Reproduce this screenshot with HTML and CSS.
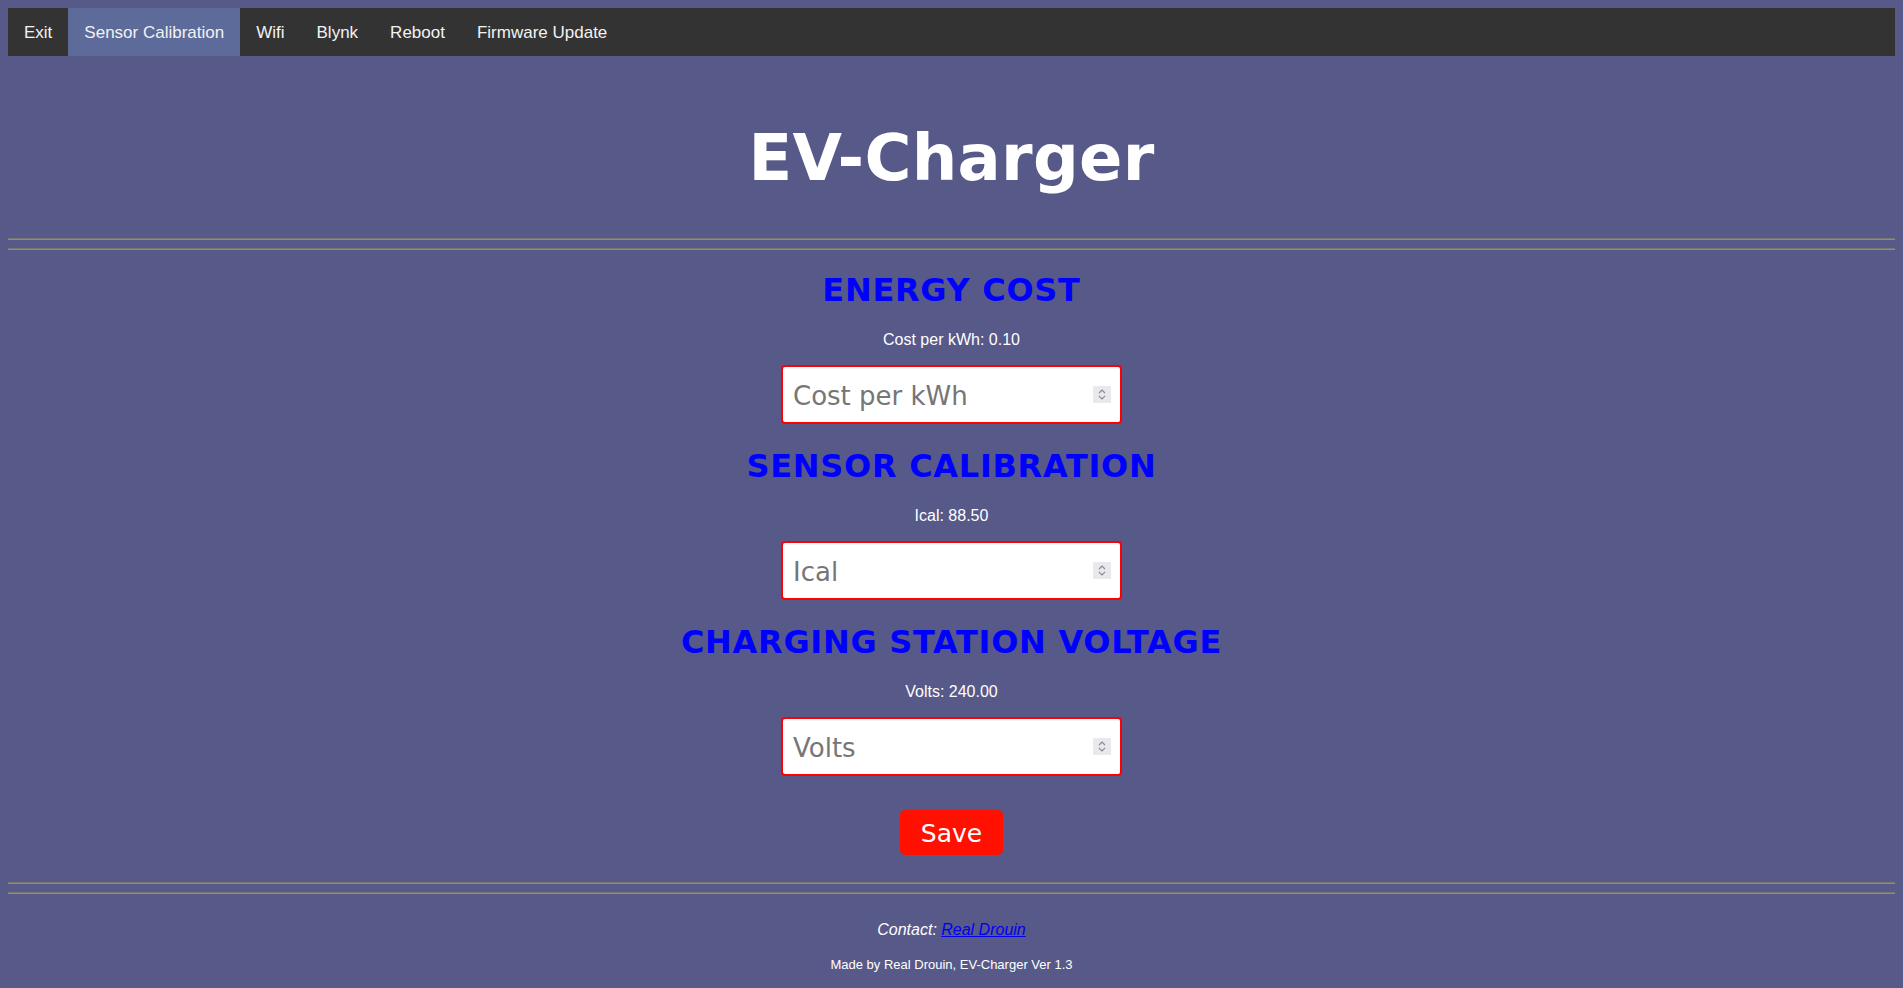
FILE: index.html
```html
<!DOCTYPE html>
<html lang="en">
<head>
<meta charset="utf-8">
<title>EV-Charger</title>
<link rel="stylesheet" href="styles.css">
</head>
<body>
<nav class="topnav">
  <a href="#" class="nav-item">Exit</a>
  <a href="#" class="nav-item active">Sensor Calibration</a>
  <a href="#" class="nav-item">Wifi</a>
  <a href="#" class="nav-item">Blynk</a>
  <a href="#" class="nav-item">Reboot</a>
  <a href="#" class="nav-item">Firmware Update</a>
</nav>

<header class="page-header">
  <h1 class="title">EV-Charger</h1>
</header>

<div class="rule-pair"><hr><hr></div>

<main class="settings">
  <section class="setting">
    <h2 class="setting-title">ENERGY COST</h2>
    <p class="setting-value">Cost per kWh: 0.10</p>
    <div class="input-wrap">
      <input class="setting-input" type="number" placeholder="Cost per kWh">
      <span class="spinner" aria-hidden="true"><svg viewBox="0 0 18 17" width="18" height="17"><path d="M6 7 L9 4 L12 7 M6 10 L9 13 L12 10" fill="none" stroke="#8a8a8e" stroke-width="1.1"/></svg></span>
    </div>
  </section>
  <section class="setting">
    <h2 class="setting-title">SENSOR CALIBRATION</h2>
    <p class="setting-value">Ical: 88.50</p>
    <div class="input-wrap">
      <input class="setting-input" type="number" placeholder="Ical">
      <span class="spinner" aria-hidden="true"><svg viewBox="0 0 18 17" width="18" height="17"><path d="M6 7 L9 4 L12 7 M6 10 L9 13 L12 10" fill="none" stroke="#8a8a8e" stroke-width="1.1"/></svg></span>
    </div>
  </section>
  <section class="setting">
    <h2 class="setting-title">CHARGING STATION VOLTAGE</h2>
    <p class="setting-value">Volts: 240.00</p>
    <div class="input-wrap">
      <input class="setting-input" type="number" placeholder="Volts">
      <span class="spinner" aria-hidden="true"><svg viewBox="0 0 18 17" width="18" height="17"><path d="M6 7 L9 4 L12 7 M6 10 L9 13 L12 10" fill="none" stroke="#8a8a8e" stroke-width="1.1"/></svg></span>
    </div>
  </section>
  <button class="save-btn" type="button">Save</button>
</main>

<div class="rule-pair"><hr><hr></div>

<footer class="page-footer">
  <p class="contact">Contact: <a href="#" class="contact-link">Real Drouin</a></p>
  <p class="credit">Made by Real Drouin, EV-Charger Ver 1.3</p>
</footer>
</body>
</html>
```

FILE: styles.css
```css
html, body {
  background: #575989;
}

body {
  margin: 8px;
  font-family: "Liberation Sans", Arial, sans-serif;
  color: #ffffff;
}

.topnav {
  display: flex;
  background: #333333;
  height: 48px;
}

.nav-item {
  display: block;
  padding: 15px 16px 13px;
  font-size: 17px;
  line-height: 20px;
  color: #f2f2f2;
  text-decoration: none;
}

.nav-item.active {
  background: #5c6b9a;
}

.page-header {
  padding: 65px 0 43px;
}

.title {
  margin: 0;
  text-align: center;
  font-family: "DejaVu Sans", Verdana, sans-serif;
  font-weight: bold;
  font-size: 64px;
  line-height: 74px;
  letter-spacing: 0.3px;
  color: #ffffff;
}

.rule-pair {
  display: flex;
  flex-direction: column;
  gap: 8px;
}

.rule-pair hr {
  margin: 0;
  border-style: solid;
  border-width: 1px 0;
  border-top-color: #77776f;
  border-bottom-color: #8c8c82;
  height: 0;
}

.settings {
  display: flex;
  flex-direction: column;
  align-items: center;
  gap: 24px;
  padding: 22px 0 27px;
}

.setting {
  display: flex;
  flex-direction: column;
  align-items: center;
}

.setting-title {
  margin: 0;
  font-family: "DejaVu Sans", Verdana, sans-serif;
  font-weight: bold;
  font-size: 32px;
  line-height: 37px;
  letter-spacing: 0.7px;
  color: #0000ff;
}

.setting-value {
  margin: 22px 0 0;
  font-size: 16px;
  line-height: 17px;
  color: #ffffff;
}

.input-wrap {
  position: relative;
  margin-top: 17px;
}

.setting-input {
  display: block;
  box-sizing: border-box;
  width: 341px;
  height: 59px;
  padding: 2px 36px 0 10px;
  border: 2px solid #ff0000;
  border-radius: 4px;
  background: #ffffff;
  font-family: "DejaVu Sans", Verdana, sans-serif;
  font-size: 26px;
  color: #333333;
  outline: none;
  -moz-appearance: textfield;
}

.setting-input::placeholder {
  color: #767676;
}

.setting-input::-webkit-inner-spin-button,
.setting-input::-webkit-outer-spin-button {
  -webkit-appearance: none;
  margin: 0;
}

.spinner {
  position: absolute;
  top: 21px;
  right: 11px;
  width: 18px;
  height: 17px;
  background: #e9e9ed;
  border-radius: 1px;
  pointer-events: none;
}

.spinner svg {
  display: block;
}

.save-btn {
  margin-top: 10px;
  width: 103px;
  height: 45px;
  border: none;
  border-radius: 5px;
  background: #ff1000;
  color: #ffffff;
  font-family: "DejaVu Sans", Verdana, sans-serif;
  font-size: 25px;
  padding: 2px 0 0;
  cursor: pointer;
}

.page-footer {
  padding-top: 27px;
  text-align: center;
}

.contact {
  margin: 0;
  font-style: italic;
  font-size: 16px;
  line-height: 18px;
}

.contact-link {
  color: #0000ee;
  text-decoration: underline;
}

.credit {
  margin: 18px 0 0;
  font-size: 13px;
  line-height: 15px;
}
```
